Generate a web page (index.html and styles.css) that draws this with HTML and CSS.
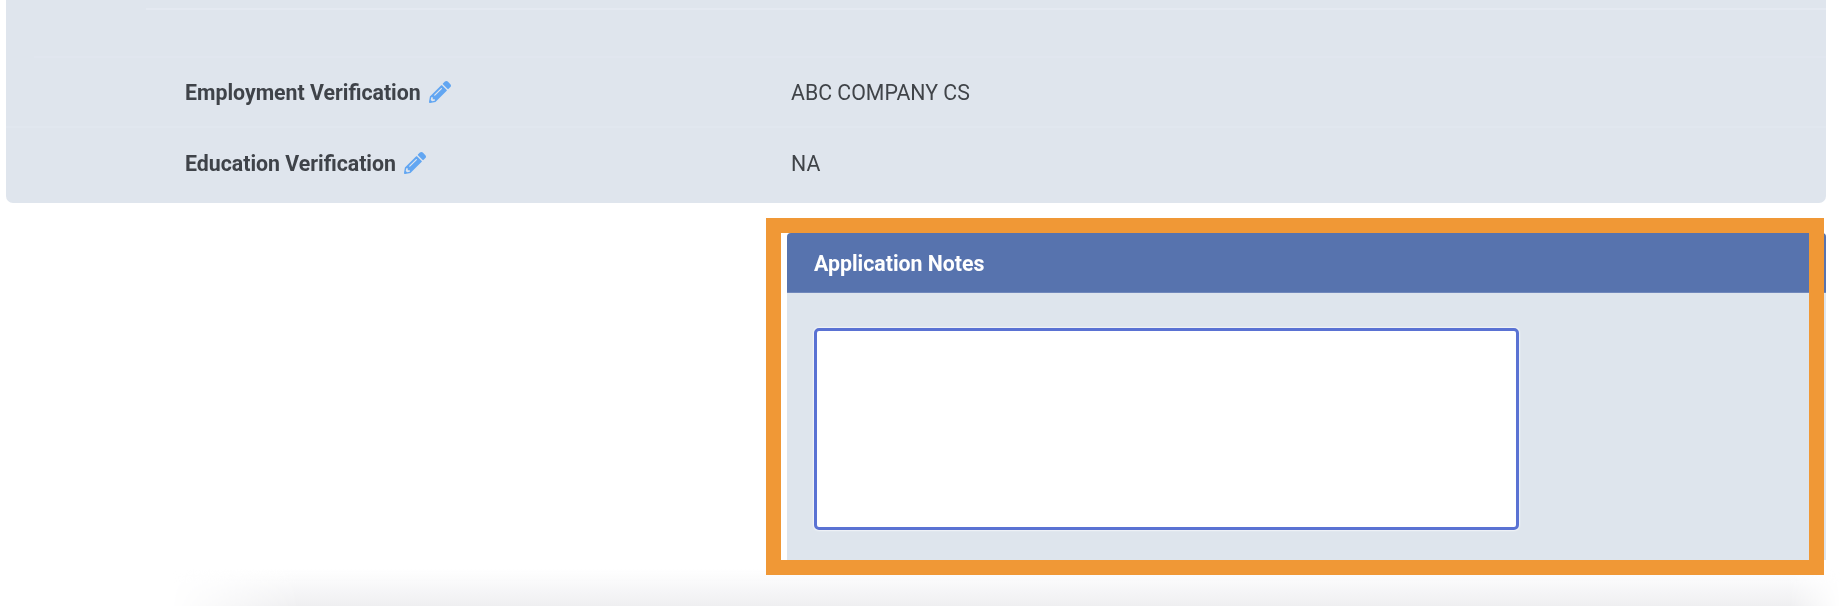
FILE: index.html
```html
<!DOCTYPE html>
<html lang="en">
<head>
<meta charset="utf-8">
<title>Application Notes</title>
<link rel="stylesheet" href="styles.css">
</head>
<body>
<svg class="icon-defs" width="0" height="0" aria-hidden="true">
  <symbol id="pencil" viewBox="0 0 512 512">
    <path d="M497.9 142.1l-46.1 46.1c-4.7 4.7-12.3 4.7-17 0l-111-111c-4.7-4.7-4.7-12.3 0-17l46.1-46.1c18.7-18.7 49.1-18.7 67.9 0l60.1 60.1c18.8 18.7 18.8 49.1 0 68zM284.2 99.8L21.6 362.4.4 483.9c-2.9 16.4 11.4 30.6 27.8 27.8l121.5-21.3 262.6-262.6c4.7-4.7 4.7-12.3 0-17l-111-111c-4.8-4.7-12.4-4.7-17.1 0zM124.1 339.9c-5.5-5.5-5.5-14.3 0-19.8l154-154c5.5-5.5 14.3-5.5 19.8 0s5.5 14.3 0 19.8l-154 154c-5.5 5.5-14.3 5.5-19.8 0zM88 424h48v36.3l-64.5 11.3-31.1-31.1L51.7 376H88v48z"/>
  </symbol>
</svg>
<main class="page">
  <section class="details">
    <div class="row row-stub"></div>
    <div class="row row-empty"></div>
    <div class="row row-data">
      <div class="label"><span class="soft">Employment Verification</span> <svg class="pencil"><use href="#pencil"/></svg></div>
      <div class="value soft">ABC COMPANY CS</div>
    </div>
    <div class="row row-data row-last">
      <div class="label"><span class="soft">Education Verification</span> <svg class="pencil"><use href="#pencil"/></svg></div>
      <div class="value soft">NA</div>
    </div>
  </section>
  <section class="notes">
    <h2 class="notes-title"><span class="soft">Application Notes</span></h2>
    <div class="notes-body">
      <textarea class="notes-input" aria-label="Application Notes"></textarea>
    </div>
  </section>
  <div class="page-fade"></div>
  <div class="highlight"></div>
</main>
</body>
</html>
```
FILE: styles.css
```css
* {
  box-sizing: border-box;
}

html,
body {
  margin: 0;
  height: 606px;
  overflow: hidden;
  background: #fff;
}

.icon-defs {
  position: absolute;
}

.page {
  position: relative;
  height: 606px;
  font-family: Roboto, "Liberation Sans", sans-serif;
}

.soft {
  filter: blur(0.7px);
}

.details {
  margin-left: 6px;
  width: 1820px;
  height: 203px;
  background: #dfe5ed;
  border-radius: 0 0 7px 7px;
}

.row {
  border-bottom: 2px solid #e1e7ef;
  margin-left: 28px;
}

.row-stub {
  height: 10px;
  border-bottom-color: #e4e9f1;
  margin-left: 140px;
}

.row-empty {
  height: 48px;
  border-bottom-color: #e1e6ef;
}

.row-data {
  display: flex;
  align-items: center;
  height: 70px;
  margin-left: 0;
  padding-left: 179px;
}

.row-last {
  height: 75px;
  border-bottom: 0;
  padding-bottom: 4px;
}

.label {
  display: flex;
  align-items: center;
  gap: 9px;
  width: 606px;
  font-size: 21.3px;
  font-weight: 700;
  color: #3f4349;
}

.pencil {
  width: 22px;
  height: 22px;
  margin-top: -1px;
  margin-left: -1px;
  fill: #62a6f2;
  filter: blur(0.5px);
}

.value {
  font-size: 21.3px;
  color: #404449;
}

.notes {
  margin: 30px 15px 0 787px;
  height: 327px;
  background: #dee5ed;
  border-radius: 4px 4px 0 0;
}

.notes-title {
  display: flex;
  align-items: center;
  height: 60px;
  margin: 0;
  padding: 1px 0 0 27px;
  background: #5773ae;
  border-bottom: 1px solid #7088bb;
  border-radius: 4px 4px 0 0;
  font-size: 21.3px;
  font-weight: 700;
  color: #fff;
}

.notes-body {
  padding: 35px 0 0 27px;
}

.notes-input {
  display: block;
  width: 705px;
  height: 202px;
  padding: 0;
  resize: none;
  background: #fff;
  border: 3px solid #5a72d3;
  border-radius: 5px;
  outline: none;
  box-shadow: 0 0 1.5px 1px rgba(255, 255, 255, 0.6);
}

.page-fade {
  position: absolute;
  left: 0;
  right: 0;
  bottom: 0;
  height: 38px;
  background: linear-gradient(to bottom, rgba(250, 250, 251, 0), #f9f9fa 40%, #efeff1);
  -webkit-mask-image: linear-gradient(to right, transparent 170px, #000 300px, #000 1790px, transparent 1841px);
  mask-image: linear-gradient(to right, transparent 170px, #000 300px, #000 1790px, transparent 1841px);
}

.highlight {
  position: absolute;
  left: 766px;
  top: 218px;
  width: 1058px;
  height: 357px;
  border: 15px solid #f09836;
}
```
